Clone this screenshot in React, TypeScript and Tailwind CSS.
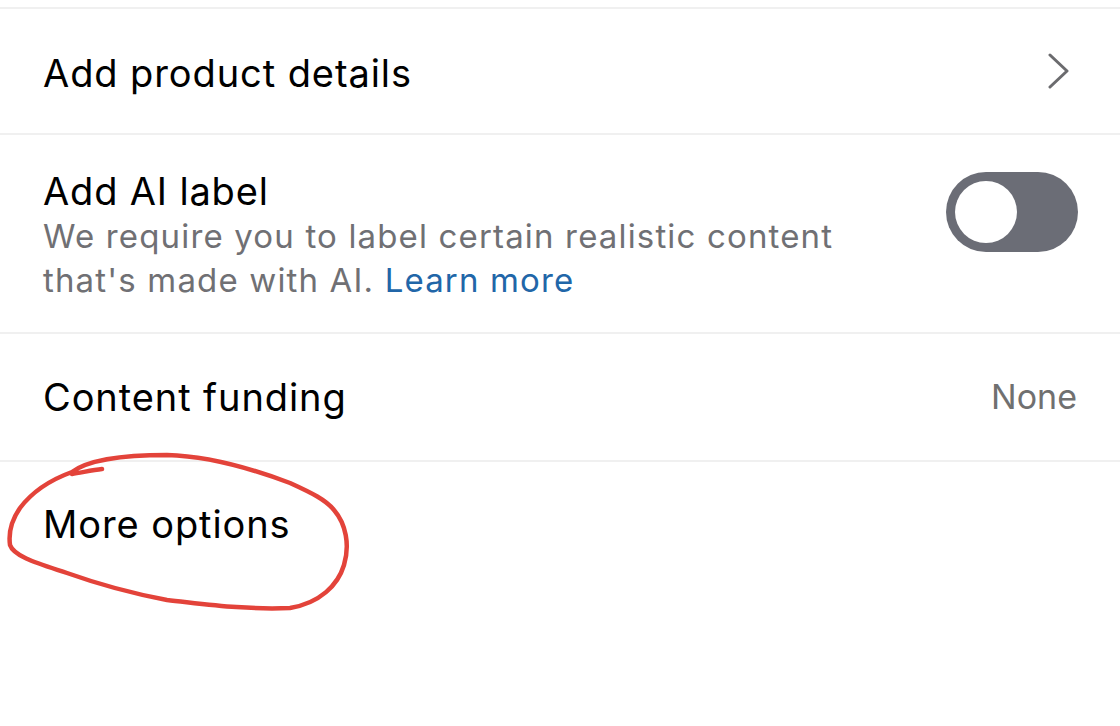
const font = { fontFamily: "Inter, 'Noto Sans', sans-serif" };

function Chevron() {
  return (
    <svg width="22" height="36" viewBox="0 0 22 36" fill="none" className="shrink-0">
      <path d="M2 2 L19 18 L2 34" stroke="#6b6b6e" strokeWidth="3" strokeLinecap="round" strokeLinejoin="round" />
    </svg>
  );
}

function Toggle() {
  return (
    <div className="w-[132px] h-[80px] rounded-full bg-[#6b6d76] flex items-center pl-[9px] shrink-0">
      <div className="w-[62px] h-[62px] rounded-full bg-white" />
    </div>
  );
}

function Scribble() {
  // hand drawn red ring round "More options"
  return (
    <svg
      className="absolute inset-0 pointer-events-none"
      width="1120"
      height="726"
      viewBox="0 0 1120 726"
      fill="none"
    >
      <path
        d="M102 469 C92 470 80 473 72 474 M72 472 C88 460 120 455 167 455 C205 456 245 466 290 483 C312 493 326 500 334 510 C346 524 350 545 344 565 C338 585 320 603 290 608 C245 610 205 604 167 600 C130 593 95 583 67 573 C40 564 14 557 10 545 C8 530 13 518 20 508 C32 492 50 480 72 472"
        stroke="#e3433a"
        strokeWidth="4.5"
        strokeLinecap="round"
        strokeLinejoin="round"
      />
    </svg>
  );
}

export default function App() {
  return (
    <div className="relative w-[1120px] h-[726px] bg-white overflow-hidden text-black" style={font}>
      <div className="h-[9px] border-b-2 border-[#f0f0f0]" />

      <div className="h-[126px] flex items-center justify-between pl-[43px] pr-[50px] border-b-2 border-[#f0f0f0]">
        <span className="text-[38px] leading-[46px] tracking-[0.024em] pt-[3px]">Add product details</span>
        <Chevron />
      </div>

      <div className="h-[199px] flex justify-between items-start pl-[43px] pr-[42px] pt-[33px] border-b-2 border-[#f0f0f0]">
        <div className="flex flex-col">
          <span className="text-[38px] leading-[46px] tracking-[0.022em]">Add AI label</span>
          <p className="text-[33px] leading-[44px] tracking-[0.035em] text-[#707074] w-[820px]">
            We require you to label certain realistic content that's made with AI.{" "}
            <span className="text-[#2166a8]">Learn more</span>
          </p>
        </div>
        <div className="pt-[4px]">
          <Toggle />
        </div>
      </div>

      <div className="h-[128px] flex items-center justify-between pl-[43px] pr-[43px] border-b-2 border-[#f0f0f0]">
        <span className="text-[38px] leading-[46px] tracking-[0.024em]">Content funding</span>
        <span className="text-[34px] leading-[46px] text-[#707070]">None</span>
      </div>

      <div className="pl-[43px] pt-[39px]">
        <span className="text-[38px] leading-[46px] tracking-[0.024em]">More options</span>
      </div>

      <Scribble />
    </div>
  );
}
